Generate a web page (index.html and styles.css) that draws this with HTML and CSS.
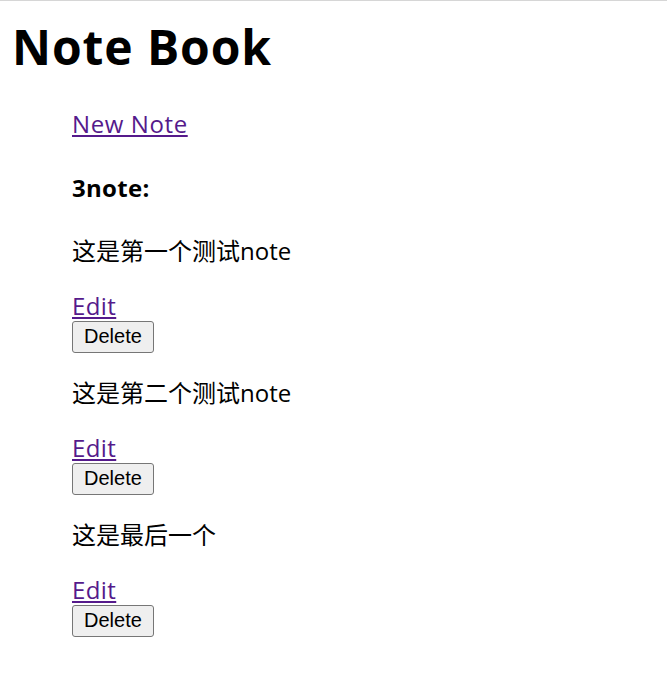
FILE: index.html
```html
<!DOCTYPE html>
<html lang="zh-CN">
<head>
<meta charset="utf-8">
<title>Note Book</title>
<link rel="stylesheet" href="styles.css">
</head>
<body>
<div class="page">
  <h1 class="title">Note Book</h1>
  <div class="content">
    <p class="new"><a class="link" href="#">New Note</a></p>
    <h4 class="count">3note:</h4>
    <div class="note">
      <p class="text">这是第一个测试note</p>
      <a class="link" href="#">Edit</a><br>
      <button class="btn" type="button">Delete</button>
    </div>
    <div class="note">
      <p class="text">这是第二个测试note</p>
      <a class="link" href="#">Edit</a><br>
      <button class="btn" type="button">Delete</button>
    </div>
    <div class="note">
      <p class="text">这是最后一个</p>
      <a class="link" href="#">Edit</a><br>
      <button class="btn" type="button">Delete</button>
    </div>
  </div>
</div>
</body>
</html>
```
FILE: styles.css
```css
html, body {
  margin: 0;
  padding: 0;
  background: #ffffff;
}
body {
  border-top: 1px solid #d6d6d6;
  font-family: "Open Sans", "Noto Sans CJK SC", sans-serif;
  font-size: 24px;
  line-height: 31px;
  color: #000000;
}
.page {
  padding: 14px 12px 24px;
}
.title {
  font-size: 48px;
  line-height: 63px;
  font-weight: 700;
  letter-spacing: 0.9px;
  margin: 0 0 30px;
}
.content {
  padding-left: 60px;
}
.new {
  margin: 0 0 33px;
  letter-spacing: 0.6px;
}
.count {
  font-size: 24px;
  font-weight: 700;
  letter-spacing: 0.3px;
  margin: 0 0 32px;
}
.note {
  margin-bottom: 24px;
}
.text {
  margin: 0 0 24px;
}
.link {
  color: #551a8b;
  text-decoration: underline;
}
.note .link {
  letter-spacing: 0.4px;
}
.btn {
  font-family: "Liberation Sans", Arial, sans-serif;
  font-size: 20px;
  line-height: 23px;
  height: 32px;
  padding: 2px 11px 3px;
  margin: 0;
  background: #efefef;
  border: 1px solid #767676;
  border-radius: 3px;
  color: #000000;
  vertical-align: top;
}
```
